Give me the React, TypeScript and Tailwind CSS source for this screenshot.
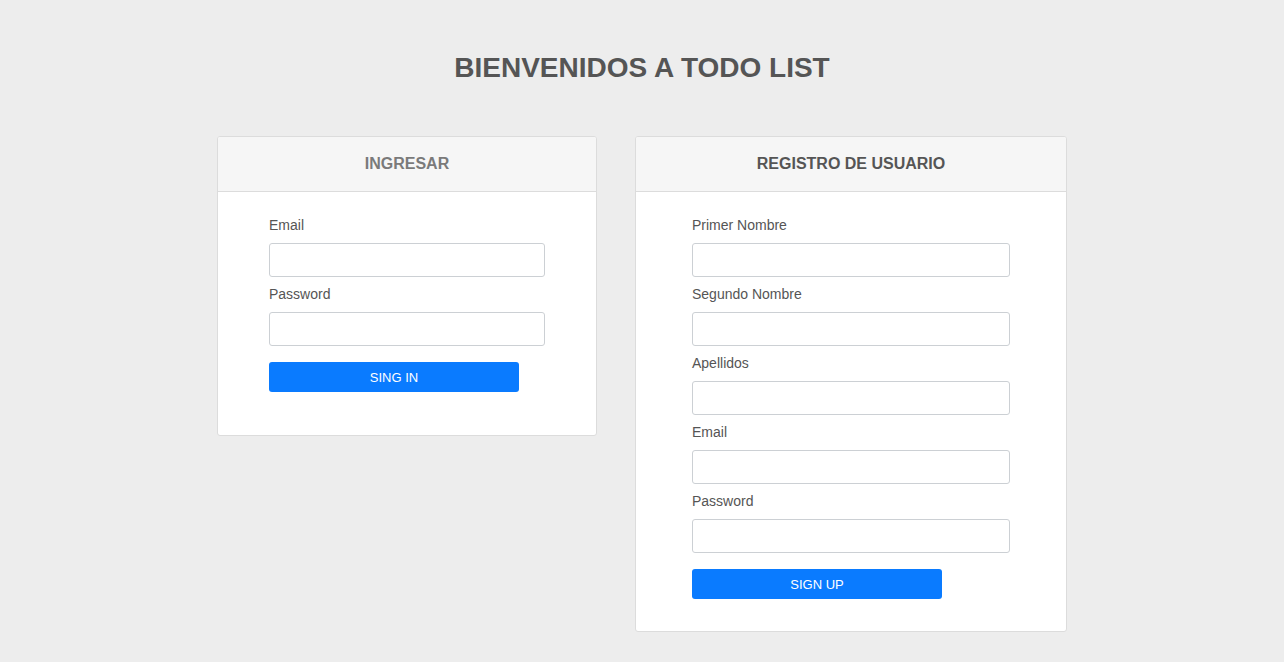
import React from "react";

function Field({ label, type = "text" }: { label: string; type?: string }) {
  return (
    <div className="flex flex-col">
      <label className="text-[14px] leading-[20px] text-[#555] mb-[8px]">{label}</label>
      <input
        type={type}
        className="h-[34px] w-full rounded-[3px] border border-[#ccd0d4] bg-white px-3 outline-none"
      />
    </div>
  );
}

function Card({
  title,
  titleColor,
  width,
  bodyClass,
  children,
}: {
  title: string;
  titleColor: string;
  width: string;
  bodyClass: string;
  children: React.ReactNode;
}) {
  return (
    <div className={`${width} rounded-[3px] border border-[#dcdcdc] bg-white overflow-hidden`}>
      <div className="bg-[#f6f6f6] border-b border-[#dcdcdc] py-[15px] text-center">
        <span className={`text-[16px] leading-[24px] font-bold ${titleColor}`}>{title}</span>
      </div>
      <div className={bodyClass}>{children}</div>
    </div>
  );
}

export default function App() {
  return (
    <div
      className="min-h-[662px] w-full bg-[#ededed] flex flex-col items-center"
      style={{ fontFamily: '"Liberation Sans", Arial, sans-serif' }}
    >
      <h1 className="mt-[52px] text-[28px] leading-[32px] font-bold text-[#555]">
        BIENVENIDOS A TODO LIST
      </h1>
      <div className="mt-[52px] flex items-start gap-[38px]">
        <Card
          title="INGRESAR"
          titleColor="text-[#7a7a7a]"
          width="w-[380px]"
          bodyClass="pt-[23px] px-[51px] pb-[43px] flex flex-col gap-[7px]"
        >
          <Field label="Email" type="email" />
          <Field label="Password" type="password" />
          <button className="mt-[9px] h-[30px] w-[250px] rounded-[3px] bg-[#0a7bff] pt-[2px] text-white text-[13px] leading-[28px]">
            SING IN
          </button>
        </Card>
        <Card
          title="REGISTRO DE USUARIO"
          titleColor="text-[#555]"
          width="w-[432px]"
          bodyClass="pt-[23px] px-[56px] pb-[32px] flex flex-col gap-[7px]"
        >
          <Field label="Primer Nombre" />
          <Field label="Segundo Nombre" />
          <Field label="Apellidos" />
          <Field label="Email" type="email" />
          <Field label="Password" type="password" />
          <button className="mt-[9px] h-[30px] w-[250px] rounded-[3px] bg-[#0a7bff] pt-[2px] text-white text-[13px] leading-[28px]">
            SIGN UP
          </button>
        </Card>
      </div>
    </div>
  );
}
